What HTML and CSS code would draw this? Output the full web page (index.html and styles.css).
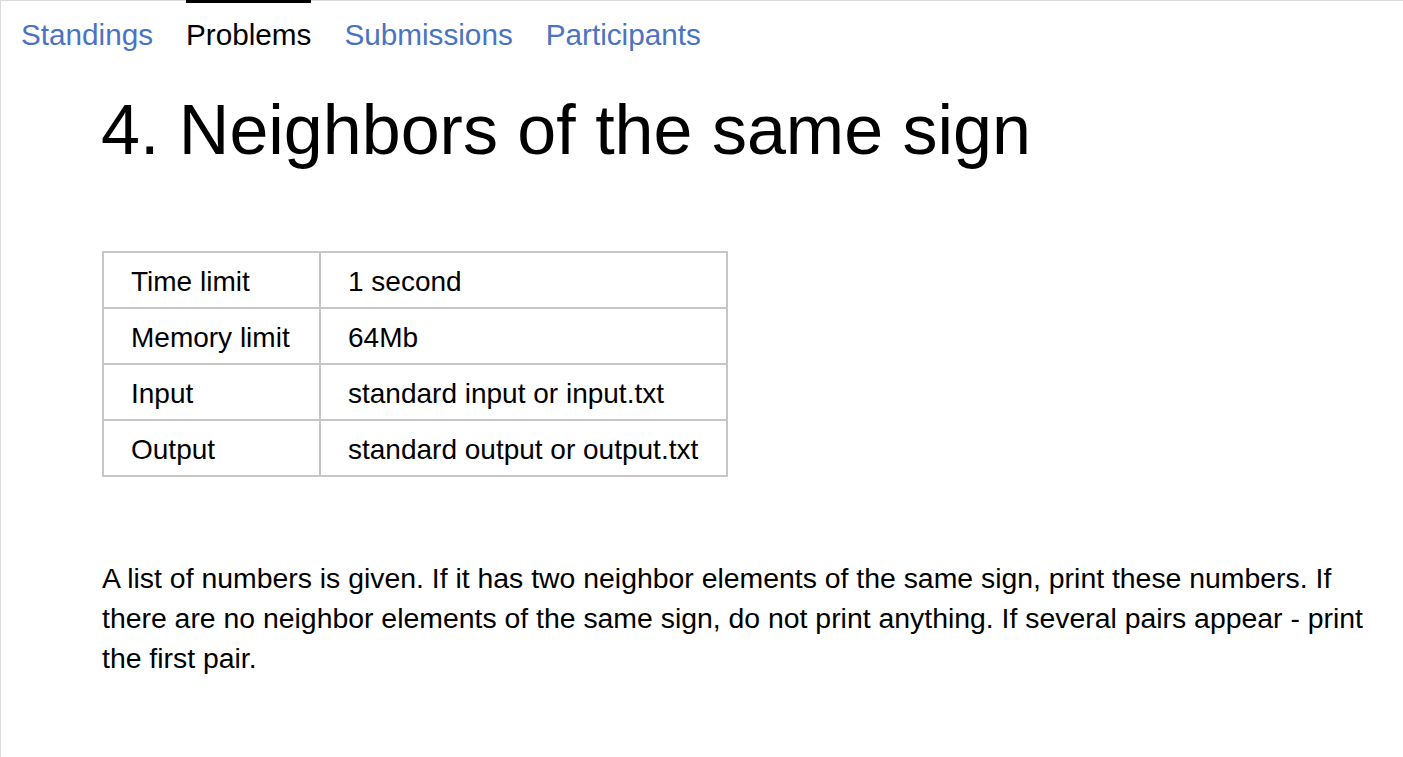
FILE: index.html
```html
<!DOCTYPE html>
<html>
<head>
<meta charset="utf-8">
<link rel="stylesheet" href="styles.css">
</head>
<body>
<div class="page">
  <nav class="tabs">
    <a class="tab" href="#">Standings</a>
    <a class="tab active" href="#">Problems</a>
    <a class="tab" href="#">Submissions</a>
    <a class="tab" href="#">Participants</a>
  </nav>
  <main class="content">
    <h1 class="title">4. Neighbors of the same sign</h1>
    <table class="limits">
      <colgroup><col class="c1"><col class="c2"></colgroup>
      <tr><td>Time limit</td><td>1 second</td></tr>
      <tr><td>Memory limit</td><td>64Mb</td></tr>
      <tr><td>Input</td><td>standard input or input.txt</td></tr>
      <tr><td>Output</td><td>standard output or output.txt</td></tr>
    </table>
    <p class="statement">A list of numbers is given. If it has two neighbor elements of the same sign, print these numbers. If there are no neighbor elements of the same sign, do not print anything. If several pairs appear - print the first pair.</p>
  </main>
</div>
</body>
</html>
```
FILE: styles.css
```css
html, body {
  margin: 0;
  padding: 0;
  background: #fff;
}
body {
  font-family: "Liberation Sans", Arial, sans-serif;
  color: #000;
}
.page {
  min-height: 757px;
  box-sizing: border-box;
  border-top: 1px solid #dcdcdc;
  border-left: 1px solid #dcdcdc;
}
.tabs {
  display: flex;
  gap: 33px;
  padding-left: 20px;
  margin-top: -1px;
}
.tab {
  display: block;
  font-size: 29.7px;
  line-height: 34px;
  padding-top: 15px;
  border-top: 3px solid transparent;
  color: #4a73c1;
  text-decoration: none;
}
.tab.active {
  color: #000;
  border-top-color: #000;
}
.content {
  padding: 0 30px 0 100px;
}
.title {
  margin: 38px 0 0 0;
  font-size: 70px;
  font-weight: normal;
  line-height: 80px;
}
.limits {
  margin-top: 81px;
  margin-left: 1px;
  border-collapse: collapse;
  table-layout: fixed;
  width: 626px;
  font-size: 28px;
}
.limits .c1 { width: 217px; }
.limits td {
  border: 2px solid #c6c6c6;
  padding: 13px 28px 9px 27px;
  line-height: 32px;
  white-space: nowrap;
}
.statement {
  margin: 81px 0 0 1px;
  max-width: 1270px;
  font-size: 28.4px;
  line-height: 40px;
}
```
